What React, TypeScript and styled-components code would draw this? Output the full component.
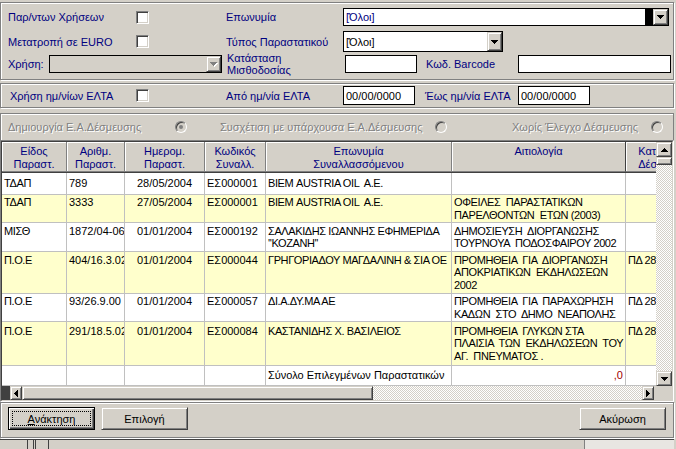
import React from 'react';
import styled, { createGlobalStyle, css } from 'styled-components';

const FACE = '#d4d0c8';
const NAVY = '#000080';
const YELLOW = '#ffffcc';
const COLS = '65px 58px 80px 61px 186px 174px 80px';
const LINE = 12.5;

const GlobalStyle = createGlobalStyle`
  * { box-sizing: border-box; }
  html, body { margin: 0; padding: 0; background: ${FACE}; }
  body {
    font-family: 'Liberation Sans', Arial, sans-serif;
    font-size: 11px;
    color: #000;
  }
`;

const etched = css`
  border: 1px solid #808080;
  box-shadow: inset 1px 1px 0 #fff, 1px 1px 0 #fff;
`;

const raised = css`
  background: ${FACE};
  border: 1px solid;
  border-color: ${FACE} #404040 #404040 ${FACE};
  box-shadow: inset 1px 1px 0 #fff, inset -1px -1px 0 #808080;
`;

const Window = styled.div`
  width: 676px;
  height: 449px;
  padding-right: 2px;
  background: ${FACE};
  display: flex;
  flex-direction: column;
  overflow: hidden;
`;

/* ---------- filter panels ---------- */

const FilterPanel = styled.div`
  ${etched}
  margin-top: 2px;
  height: 78px;
  padding: 5px 0 0 7px;
  display: flex;
  flex-direction: column;
  flex-shrink: 0;
`;

const EltaPanel = styled.div`
  ${etched}
  margin-top: 3px;
  height: 25px;
  padding-left: 7px;
  display: flex;
  align-items: center;
  flex-shrink: 0;
`;

const FieldRow = styled.div<{ $h: number; $mt?: number }>`
  display: flex;
  align-items: center;
  height: ${p => p.$h}px;
  margin-top: ${p => p.$mt ?? 0}px;
  flex-shrink: 0;
`;

const Label = styled.span<{ $w: number; $pl?: number }>`
  flex: 0 0 ${p => p.$w}px;
  padding-left: ${p => p.$pl ?? 0}px;
  color: ${NAVY};
  white-space: nowrap;
`;

const TwoLineLabel = styled(Label)`
  white-space: pre;
  line-height: 12px;
`;

const CheckCell = styled.div`
  flex: 0 0 90px;
  display: flex;
`;

const CheckBox = styled.span`
  width: 13px;
  height: 13px;
  background: #fff;
  border: 1px solid;
  border-color: #808080 #fff #fff #808080;
  box-shadow: inset 1px 1px 0 #404040, inset -1px -1px 0 ${FACE};
`;

const ComboBox = styled.div<{ $w: number; $h: number; $disabled?: boolean }>`
  flex: 0 0 ${p => p.$w}px;
  height: ${p => p.$h}px;
  display: flex;
  border: 1px solid #000;
  background: ${p => (p.$disabled ? FACE : '#fff')};
`;

const ComboText = styled.span<{ $color?: string }>`
  flex: 1;
  display: flex;
  align-items: center;
  padding-left: 2px;
  color: ${p => p.$color ?? '#000'};
  white-space: nowrap;
`;

const ComboMark = styled.span`
  flex: 0 0 8px;
  background: #000;
`;

const DropButton = styled.span`
  ${raised}
  flex: 0 0 15px;
  display: flex;
  align-items: center;
  justify-content: center;
`;

const TextBox = styled.div<{ $w: number; $h: number }>`
  flex: 0 0 ${p => p.$w}px;
  height: ${p => p.$h}px;
  background: #fff;
  border: 1px solid #000;
  padding-left: 2px;
  display: flex;
  align-items: center;
  white-space: nowrap;
`;

/* ---------- radio bar ---------- */

const RadioBar = styled.div`
  margin-top: 5px;
  height: 27px;
  border: 1px solid #808080;
  border-bottom: none;
  box-shadow: inset 1px 1px 0 #fff;
  padding-left: 7px;
  display: flex;
  align-items: center;
  flex-shrink: 0;
`;

const DisabledText = styled.span<{ $w: number; $ml?: number }>`
  flex: 0 0 ${p => p.$w}px;
  margin-left: ${p => p.$ml ?? 0}px;
  color: #808080;
  text-shadow: 1px 1px 0 #fff;
  white-space: nowrap;
`;

const Radio = styled.span<{ $checked?: boolean }>`
  flex: 0 0 12px;
  height: 12px;
  border-radius: 50%;
  background: ${FACE};
  border: 1px solid;
  border-color: #808080 #fff #fff #808080;
  box-shadow: inset 1px 1px 0 #404040;
  display: flex;
  align-items: center;
  justify-content: center;

  &::after {
    content: '';
    display: ${p => (p.$checked ? 'block' : 'none')};
    width: 4px;
    height: 4px;
    border-radius: 50%;
    background: #808080;
  }
`;

/* ---------- grid ---------- */

const GridBox = styled.div`
  height: 262px;
  flex-shrink: 0;
  border: 1px solid;
  border-color: #808080 #fff #fff #808080;
`;

const GridInner = styled.div`
  height: 100%;
  border: 1px solid;
  border-color: #404040 ${FACE} ${FACE} #404040;
  display: grid;
  grid-template-columns: 654px 16px;
  grid-template-rows: 244px 14px;
`;

const TableArea = styled.div`
  overflow: hidden;
  background: #fff;
`;

const HeaderRow = styled.div`
  display: grid;
  grid-template-columns: ${COLS};
  height: 31px;
  border-bottom: 1px solid #404040;
`;

const HeaderCell = styled.div`
  background: ${FACE};
  color: ${NAVY};
  text-align: center;
  line-height: ${LINE}px;
  padding-top: 3px;
  white-space: pre;
  overflow: hidden;
  border-right: 1px solid #808080;
  border-bottom: 1px solid #808080;
  box-shadow: inset 1px 1px 0 #fff;

  &:nth-child(6) {
    border-right-color: #404040;
  }
`;

const BodyRow = styled.div<{ $h: number; $bg: string }>`
  display: grid;
  grid-template-columns: ${COLS};
  height: ${p => p.$h}px;
  background: ${p => p.$bg};
`;

const BodyCell = styled.div<{ $pt: number; $align: string; $tight: boolean; $color?: string }>`
  padding: ${p => p.$pt}px 2px 0 2px;
  line-height: ${LINE}px;
  text-align: ${p => p.$align};
  letter-spacing: ${p => (p.$tight ? '-0.4px' : '0')};
  color: ${p => p.$color ?? '#000'};
  white-space: pre;
  overflow: hidden;
  border-right: 1px solid #c0c0c0;
  border-bottom: 1px solid #c0c0c0;
`;

const dither = css`
  background-color: ${FACE};
  background-image: repeating-conic-gradient(#fff 0 25%, transparent 0 50%);
  background-size: 2px 2px;
`;

const VScroll = styled.div`
  ${dither}
  display: flex;
  flex-direction: column;
`;

const HScroll = styled.div`
  ${dither}
  display: flex;
`;

const ScrollButton = styled.span<{ $w: number; $h: number }>`
  ${raised}
  flex: 0 0 auto;
  width: ${p => p.$w}px;
  height: ${p => p.$h}px;
  display: flex;
  align-items: center;
  justify-content: center;
`;

const Thumb = styled.span<{ $w: number; $h: number }>`
  ${raised}
  flex: 0 0 auto;
  width: ${p => p.$w}px;
  height: ${p => p.$h}px;
`;

const Track = styled.span`
  flex: 1;
`;

const DarkStub = styled.span`
  flex: 0 0 8px;
  background: #404040;
`;

const FaceStub = styled.span`
  flex: 0 0 2px;
  background: ${FACE};
`;

const Corner = styled.div`
  background: ${FACE};
`;

/* ---------- buttons ---------- */

const ButtonBar = styled.div`
  ${etched}
  height: 36px;
  flex-shrink: 0;
  padding: 4px 7px 0;
  display: flex;
  align-items: flex-start;
  gap: 6px;
`;

const PushButton = styled.button<{ $default?: boolean; $right?: boolean }>`
  width: 87px;
  height: 23px;
  padding: 0;
  font: inherit;
  color: #000;
  background: ${FACE};
  margin-left: ${p => (p.$right ? 'auto' : '0')};
  ${p =>
    p.$default
      ? css`
          border: 1px solid #000;
          box-shadow: inset 1px 1px 0 #fff, inset -1px -1px 0 #404040, inset -2px -2px 0 #808080;
          outline: 1px dotted #000;
          outline-offset: -5px;
        `
      : raised}
`;

const Footer = styled.div`
  flex: 1;
  margin-top: 1px;
  border-top: 1px solid #404040;
  display: flex;
`;

const FooterMark = styled.span<{ $ml: number }>`
  flex: 0 0 1px;
  margin-left: ${p => p.$ml}px;
  background: #404040;
`;

const FooterPane = styled.span`
  flex: 1;
  margin-left: 535px;
  border-left: 1px solid #808080;
  background: #e8e6e2;
`;

/* ---------- arrows ---------- */

type Dir = 'up' | 'down' | 'left' | 'right';

const ARROWS: Record<Dir, string> = {
  down: 'M0 0h7v1H0z M1 1h5v1H1z M2 2h3v1H2z M3 3h1v1H3z',
  up: 'M3 0h1v1H3z M2 1h3v1H2z M1 2h5v1H1z M0 3h7v1H0z',
  left: 'M0 3h1v1H0z M1 2h1v3H1z M2 1h1v5H2z M3 0h1v7H3z',
  right: 'M0 0h1v7H0z M1 1h1v5H1z M2 2h1v3H2z M3 3h1v1H3z',
};

const Arrow: React.FC<{ dir: Dir; disabled?: boolean }> = ({ dir, disabled }) => {
  const vertical = dir === 'up' || dir === 'down';
  const w = (vertical ? 7 : 4) + (disabled ? 1 : 0);
  const h = (vertical ? 4 : 7) + (disabled ? 1 : 0);
  return (
    <svg width={w} height={h} viewBox={`0 0 ${w} ${h}`} shapeRendering="crispEdges">
      {disabled && <path d={ARROWS[dir]} fill="#fff" transform="translate(1 1)" />}
      <path d={ARROWS[dir]} fill={disabled ? '#808080' : '#000'} />
    </svg>
  );
};

/* ---------- data ---------- */

const headers = [
  'Είδος\nΠαραστ.',
  'Αριθμ.\nΠαραστ.',
  'Ημερομ.\nΠαραστ.',
  'Κωδικός\nΣυναλλ.',
  'Επωνυμία\nΣυναλλασσόμενου',
  'Αιτιολογία',
  'Κατάσταση\nΔέσμευσης',
];

const ALIGN = ['left', 'left', 'center', 'left', 'left', 'left', 'left'];
const TIGHT = [true, false, false, false, true, true, true];

interface Row {
  h: number;
  bg: string;
  cells: string[];
  total?: boolean;
}

const rows: Row[] = [
  { h: 22, bg: '#fff', cells: ['ΤΔΑΠ', '789', '28/05/2004', 'ΕΣ000001', 'ΒΙΕΜ AUSTRIA OIL  A.E.', '', ''] },
  {
    h: 28,
    bg: YELLOW,
    cells: ['ΤΔΑΠ', '3333', '27/05/2004', 'ΕΣ000001', 'ΒΙΕΜ AUSTRIA OIL  A.E.', 'ΟΦΕΙΛΕΣ  ΠΑΡΑΣΤΑΤΙΚΩΝ\nΠΑΡΕΛΘΟΝΤΩΝ  ΕΤΩΝ (2003)', ''],
  },
  {
    h: 29,
    bg: '#fff',
    cells: [
      'ΜΙΣΘ',
      '1872/04-06-02',
      '01/01/2004',
      'ΕΣ000192',
      "ΣΑΛΑΚΙΔΗΣ ΙΩΑΝΝΗΣ ΕΦΗΜΕΡΙΔΑ\n''ΚΟΖΑΝΗ''",
      'ΔΗΜΟΣΙΕΥΣΗ  ΔΙΟΡΓΑΝΩΣΗΣ\nΤΟΥΡΝΟΥΑ  ΠΟΔΟΣΦΑΙΡΟΥ 2002',
      '',
    ],
  },
  {
    h: 42,
    bg: YELLOW,
    cells: [
      'Π.Ο.Ε',
      '404/16.3.02',
      '01/01/2004',
      'ΕΣ000044',
      'ΓΡΗΓΟΡΙΑΔΟΥ ΜΑΓΔΑΛΙΝΗ & ΣΙΑ ΟΕ',
      'ΠΡΟΜΗΘΕΙΑ  ΓΙΑ  ΔΙΟΡΓΑΝΩΣΗ\nΑΠΟΚΡΙΑΤΙΚΩΝ  ΕΚΔΗΛΩΣΕΩΝ\n2002',
      'ΠΔ 28/80',
    ],
  },
  {
    h: 28,
    bg: '#fff',
    cells: [
      'Π.Ο.Ε',
      '93/26.9.00',
      '01/01/2004',
      'ΕΣ000057',
      'ΔΙ.Α.ΔΥ.ΜΑ ΑΕ',
      'ΠΡΟΜΗΘΕΙΑ  ΓΙΑ  ΠΑΡΑΧΩΡΗΣΗ\nΚΑΔΩΝ  ΣΤΟ  ΔΗΜΟ  ΝΕΑΠΟΛΗΣ',
      'ΠΔ 28/80',
    ],
  },
  {
    h: 44,
    bg: YELLOW,
    cells: [
      'Π.Ο.Ε',
      '291/18.5.02',
      '01/01/2004',
      'ΕΣ000084',
      'ΚΑΣΤΑΝΙΔΗΣ Χ. ΒΑΣΙΛΕΙΟΣ',
      'ΠΡΟΜΗΘΕΙΑ  ΓΛΥΚΩΝ ΣΤΑ\nΠΛΑΙΣΙΑ  ΤΩΝ  ΕΚΔΗΛΩΣΕΩΝ  ΤΟΥ\nΑΓ.  ΠΝΕΥΜΑΤΟΣ .',
      'ΠΔ 28/80',
    ],
  },
  { h: 20, bg: '#fff', total: true, cells: ['', '', '', '', 'Σύνολο Επιλεγμένων Παραστατικών', ',0', ''] },
];

const App: React.FC = () => {
  return (
    <>
      <GlobalStyle />
      <Window>
        <FilterPanel>
          <FieldRow $h={18}>
            <Label $w={128}>Παρ/ντων Χρήσεων</Label>
            <CheckCell>
              <CheckBox />
            </CheckCell>
            <Label $w={117}>Επωνυμία</Label>
            <ComboBox $w={326} $h={18}>
              <ComboText $color={NAVY}>[Όλοι]</ComboText>
              <ComboMark />
              <DropButton>
                <Arrow dir="down" />
              </DropButton>
            </ComboBox>
          </FieldRow>

          <FieldRow $h={21} $mt={5}>
            <Label $w={128}>Μετατροπή σε EURO</Label>
            <CheckCell>
              <CheckBox />
            </CheckCell>
            <Label $w={117}>Τύπος Παραστατικού</Label>
            <ComboBox $w={160} $h={21}>
              <ComboText>[Όλοι]</ComboText>
              <DropButton>
                <Arrow dir="down" />
              </DropButton>
            </ComboBox>
          </FieldRow>

          <FieldRow $h={24}>
            <Label $w={41}>Χρήση:</Label>
            <ComboBox $w={173} $h={18} $disabled>
              <ComboText />
              <DropButton>
                <Arrow dir="down" disabled />
              </DropButton>
            </ComboBox>
            <TwoLineLabel $w={123} $pl={5}>{'Κατάσταση\nΜισθοδοσίας'}</TwoLineLabel>
            <TextBox $w={72} $h={18} />
            <Label $w={101} $pl={9}>Κωδ. Barcode</Label>
            <TextBox $w={153} $h={18} />
          </FieldRow>
        </FilterPanel>

        <EltaPanel>
          <Label $w={128} $pl={2}>Χρήση ημ/νίων ΕΛΤΑ</Label>
          <CheckCell>
            <CheckBox />
          </CheckCell>
          <Label $w={117}>Από ημ/νία ΕΛΤΑ</Label>
          <TextBox $w={72} $h={19}>00/00/0000</TextBox>
          <Label $w={103} $pl={10}>Έως ημ/νία ΕΛΤΑ</Label>
          <TextBox $w={72} $h={19}>00/00/0000</TextBox>
        </EltaPanel>

        <RadioBar>
          <DisabledText $w={167}>Δημιουργία Ε.Α.Δέσμευσης</DisabledText>
          <Radio $checked />
          <DisabledText $w={215} $ml={33}>Συσχέτιση με υπάρχουσα Ε.Α.Δέσμευσης</DisabledText>
          <Radio />
          <DisabledText $w={139} $ml={65}>Χωρίς Έλεγχο Δέσμευσης</DisabledText>
          <Radio />
        </RadioBar>

        <GridBox>
          <GridInner>
            <TableArea>
              <HeaderRow>
                {headers.map(h => (
                  <HeaderCell key={h}>{h}</HeaderCell>
                ))}
              </HeaderRow>
              {rows.map((row, i) => {
                const lines = Math.max(...row.cells.map(c => c.split('\n').length));
                const pt = (row.h - 1 - lines * LINE) / 2;
                return (
                  <BodyRow key={i} $h={row.h} $bg={row.bg}>
                    {row.cells.map((c, j) => (
                      <BodyCell
                        key={j}
                        $pt={pt}
                        $align={row.total && j === 5 ? 'right' : ALIGN[j]}
                        $tight={!row.total && TIGHT[j]}
                        $color={row.total && j === 5 ? '#a00000' : undefined}
                      >
                        {c}
                      </BodyCell>
                    ))}
                  </BodyRow>
                );
              })}
            </TableArea>

            <VScroll>
              <ScrollButton $w={16} $h={15}>
                <Arrow dir="up" />
              </ScrollButton>
              <Thumb $w={16} $h={8} />
              <Track />
              <ScrollButton $w={16} $h={15}>
                <Arrow dir="down" />
              </ScrollButton>
            </VScroll>

            <HScroll>
              <DarkStub />
              <ScrollButton $w={12} $h={14}>
                <Arrow dir="left" />
              </ScrollButton>
              <Thumb $w={351} $h={14} />
              <Track />
              <ScrollButton $w={12} $h={14}>
                <Arrow dir="right" />
              </ScrollButton>
              <FaceStub />
            </HScroll>

            <Corner />
          </GridInner>
        </GridBox>

        <ButtonBar>
          <PushButton $default>
            <u>Α</u>νάκτηση
          </PushButton>
          <PushButton>Επιλογή</PushButton>
          <PushButton $right>Ακύρωση</PushButton>
        </ButtonBar>

        <Footer>
          <FooterMark $ml={27} />
          <FooterMark $ml={5} />
          <FooterMark $ml={1} />
          <FooterMark $ml={12} />
          <FooterPane />
        </Footer>
      </Window>
    </>
  );
};

export default App;
